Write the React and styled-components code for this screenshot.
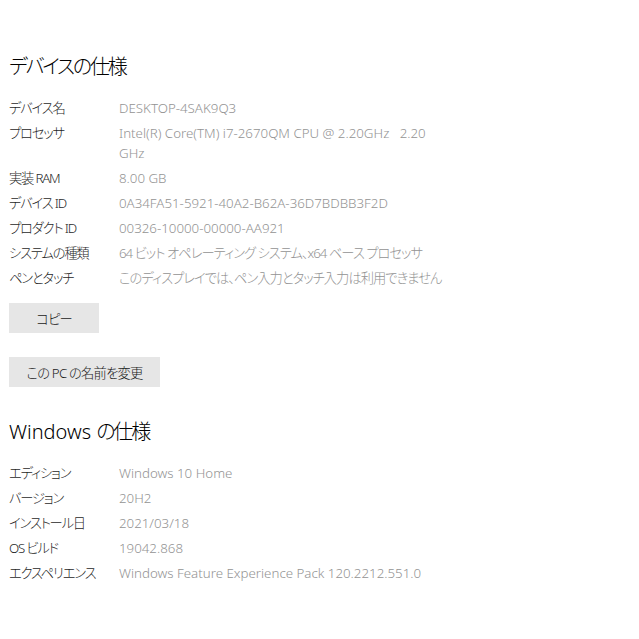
import React from 'react';
import styled, { createGlobalStyle } from 'styled-components';

const GlobalStyle = createGlobalStyle`
  body {
    margin: 0;
    background: #ffffff;
    font-family: "Noto Sans", "Noto Sans CJK JP", sans-serif;
    font-feature-settings: "palt";
  }
`;

const Page = styled.div`
  width: 639px;
  height: 639px;
  box-sizing: border-box;
  padding: 53px 0 0 9px;
  background: #fff;
`;

const Section = styled.section`
  display: flex;
  flex-direction: column;
  align-items: flex-start;
  margin-bottom: 31px;
`;

const Title = styled.h2`
  margin: 0 0 17px;
  font-size: 20px;
  line-height: 28px;
  font-weight: 300;
  color: #000;
`;

// kana in the original UI font are narrower than Noto CJK
const Jp = styled.span`
  letter-spacing: -2.2px;
`;

const SpecList = styled.dl`
  display: grid;
  grid-template-columns: 110px auto;
  row-gap: 5px;
  margin: 0;
  font-size: 13.3px;
  line-height: 20px;
`;

const Label = styled.dt`
  margin: 0;
  color: #1f1f1f;
  font-weight: 300;
  letter-spacing: -1.2px;
  white-space: nowrap;
`;

const Value = styled.dd`
  margin: 0;
  color: #939393;
  font-weight: 300;
  letter-spacing: ${(p) => (p.$cjk ? '-1px' : '0')};
  white-space: pre;
`;

const Button = styled.button`
  width: ${(p) => p.$width}px;
  height: 30px;
  margin-top: ${(p) => p.$top}px;
  padding: 0;
  border: none;
  background: #e6e6e6;
  color: #1a1a1a;
  font-family: inherit;
  font-feature-settings: "palt";
  font-weight: 300;
  font-size: 13.3px;
  letter-spacing: -0.8px;
  cursor: pointer;
`;

const device = [
  ['デバイス名', 'DESKTOP-4SAK9Q3'],
  ['プロセッサ', 'Intel(R) Core(TM) i7-2670QM CPU @ 2.20GHz   2.20\nGHz'],
  ['実装 RAM', '8.00 GB'],
  ['デバイス ID', '0A34FA51-5921-40A2-B62A-36D7BDBB3F2D'],
  ['プロダクト ID', '00326-10000-00000-AA921'],
  ['システムの種類', '64 ビット オペレーティング システム、x64 ベース プロセッサ', true],
  ['ペンとタッチ', 'このディスプレイでは、ペン入力とタッチ入力は利用できません', true],
];

const windows = [
  ['エディション', 'Windows 10 Home'],
  ['バージョン', '20H2'],
  ['インストール日', '2021/03/18'],
  ['OS ビルド', '19042.868'],
  ['エクスペリエンス', 'Windows Feature Experience Pack 120.2212.551.0'],
];

const Specs = ({ items }) => (
  <SpecList>
    {items.map(([label, value, cjk]) => (
      <React.Fragment key={label}>
        <Label>{label}</Label>
        <Value $cjk={cjk}>{value}</Value>
      </React.Fragment>
    ))}
  </SpecList>
);

const App = () => (
  <>
    <GlobalStyle />
    <Page>
      <Section>
        <Title><Jp>デバイスの仕様</Jp></Title>
        <Specs items={device} />
        <Button $width={90} $top={15}>コピー</Button>
        <Button $width={151} $top={24}>この PC の名前を変更</Button>
      </Section>
      <Section>
        <Title>Windows <Jp>の仕様</Jp></Title>
        <Specs items={windows} />
      </Section>
    </Page>
  </>
);

export default App;
